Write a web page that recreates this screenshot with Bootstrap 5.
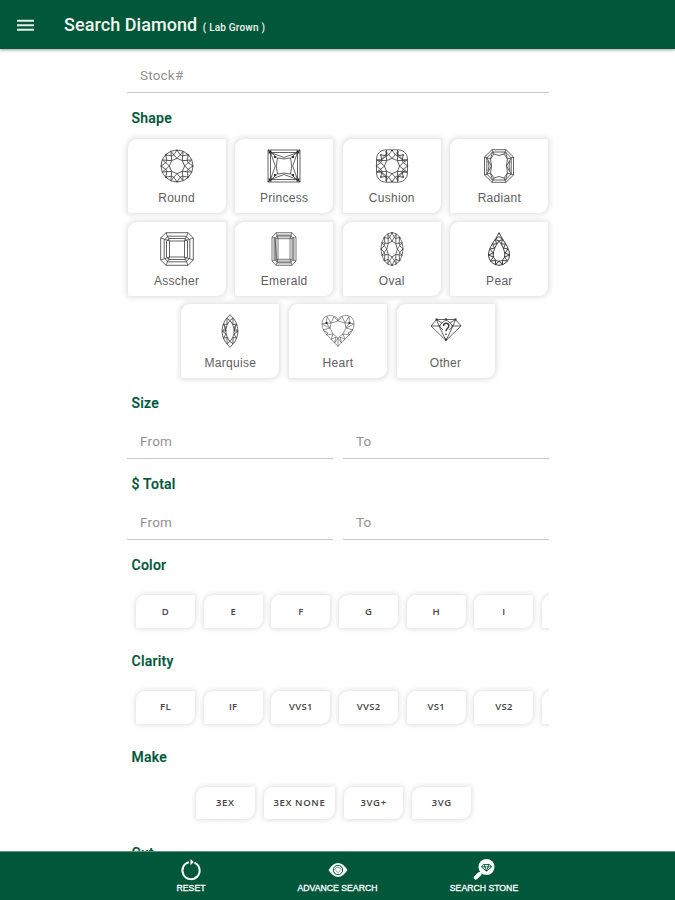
<!DOCTYPE html>
<html lang="en">
<head>
<meta charset="utf-8">
<meta name="viewport" content="width=device-width, initial-scale=1">
<title>Search Diamond</title>
<link href="https://cdn.jsdelivr.net/npm/bootstrap@5.3.0/dist/css/bootstrap.min.css" rel="stylesheet">
<style>
:root{--green:#00573a}
body{font-family:Roboto,"Liberation Sans",sans-serif;background:#fff;color:#444}
.topbar{height:49px;background:var(--green);box-shadow:0 1px 3px rgba(0,0,0,.4);padding:2px 17px 0;z-index:2}
.topbar svg{width:17px;height:13px}
.app-title{font-size:18px;font-weight:500;line-height:24px;letter-spacing:.06px;margin-left:30px;padding-top:2px;color:#f3f6ee}
.app-title span{font-size:10px;letter-spacing:.2px;margin-left:1px}
.panel{width:422px;margin-left:127px}
.field{height:36px;border:0;border-bottom:1px solid #c8c8c8;border-radius:0;background:transparent;padding:0 13px;font-size:13.5px;letter-spacing:.2px;color:#444}
.field::placeholder{color:#929292;opacity:1}
.field:focus{box-shadow:none}
.field-stock{margin-top:8px}
.field-pair{gap:10px;margin-top:10px}
.section-title{font-size:14px;font-weight:500;letter-spacing:.25px;line-height:20px;color:var(--green);margin:15px 0 0;padding-left:4.5px;-webkit-text-stroke:.2px var(--green)}
.title-chips{margin-top:18.3px}
.shapes{margin:11px -2px 0;gap:8.7px 9.6px}
.tile{width:98px;height:74px;background:#fff;border:0;border-radius:9px 2px 9px 2px;box-shadow:0 0 5px 2px rgba(0,0,0,.11);padding:10px 0 0}
.tile svg{width:34px;height:34px;fill:none;stroke:#3c3c3c;stroke-width:.8}
.tile svg.ink-strong{stroke-width:1}
.tile svg.ink-light{stroke:#666;stroke-width:.7}
.tile-name{font:12px/16px "Liberation Sans",Arial,sans-serif;letter-spacing:.3px;color:#606060;margin-top:7px}
.chips{gap:8.7px}
.chips-scroll{margin:15px 0 0;padding:5px 9px;width:422px}
.chips-make{gap:9.2px;padding:5px 13px 5px 4px}
.chip{min-width:59px;height:32.5px;flex:none;background:#fff;border:0;border-radius:9px 2px 9px 2px;box-shadow:0 0 5px 1px rgba(0,0,0,.13);font:9.5px/32px "Open Sans","Liberation Sans",sans-serif;font-weight:600;letter-spacing:.3px;color:#444;text-align:center;padding:0 9.5px}
.chips-make .chip{letter-spacing:.65px}
.bottombar{height:49px;background:var(--green);border-top:1px solid #668f7e;z-index:2}
.bottombar a{width:146.5px;color:#fff;text-decoration:none;font:8.7px/10px "Liberation Sans",Arial,sans-serif;-webkit-text-stroke:.3px #fff;padding-top:7px}
.bottombar svg{width:22px;height:22px;margin-bottom:2px}
</style>
</head>
<body>
<svg width="0" height="0" class="position-absolute" aria-hidden="true">
  <defs>
    <g id="facet"><path d="M0-16 3.2-11.2 0-7.6-3.2-11.2ZM0-7.6 5.4-5.4M3.2-11.2 6.1-14.8M-3.2-11.2-6.1-14.8M3.2-11.2 5.7-10.2"/><circle cx="0" cy="-15.5" r=".5"/></g>
    <g id="brilliant"><use href="#facet"/><use href="#facet" transform="rotate(45)"/><use href="#facet" transform="rotate(90)"/><use href="#facet" transform="rotate(135)"/><use href="#facet" transform="rotate(180)"/><use href="#facet" transform="rotate(225)"/><use href="#facet" transform="rotate(270)"/><use href="#facet" transform="rotate(315)"/></g>
  </defs>
</svg>
<div class="d-flex flex-column vh-100 overflow-hidden">
  <header class="topbar d-flex align-items-center flex-shrink-0 position-relative">
    <svg viewBox="0 0 17 13" aria-label="Menu"><path d="M0 1.800h17M0 6.300h17M0 10.800h17" stroke="#e8eee8" stroke-width="2.100"/></svg>
    <h1 class="app-title mb-0">Search Diamond <span>( Lab Grown )</span></h1>
  </header>

  <main class="flex-grow-1 overflow-hidden">
    <div class="panel">
      <input class="form-control field field-stock" placeholder="Stock#" aria-label="Stock#">
      <h2 class="section-title">Shape</h2>
      <div class="shapes d-flex flex-wrap justify-content-center">
        <button class="tile d-flex flex-column align-items-center"><svg viewBox="-17 -17 34 34"><circle r="16"/><use href="#brilliant"/></svg><span class="tile-name">Round</span></button>
        <button class="tile d-flex flex-column align-items-center"><svg viewBox="-17 -17 34 34"><path d="M-16-16H16V16H-16ZM-13.5-13.5H13.5V13.5H-13.5ZM-16-16-6.5-8Q0-6 6.5-8L16-16M-16 16-6.5 8Q0 6 6.5 8L16 16M-6.5-8Q-9 0-6.5 8M6.5-8Q9 0 6.5 8M-13.5-13.5 0-8.5 13.5-13.5 8.7 0 13.5 13.5 0 8.5-13.5 13.5-8.7 0Z"/><path d="M-15.500-15.500h3v3h-3zM12.500-15.500h3v3h-3zM-15.500 12.500h3v3h-3zM12.500 12.500h3v3h-3zM-10-10h2v2h-2zM8-10h2v2H8zM-10 8h2v2h-2zM8 8h2v2H8z" fill="#333" stroke="none"/></svg><span class="tile-name">Princess</span></button>
        <button class="tile d-flex flex-column align-items-center"><svg viewBox="-17 -17 34 34"><rect x="-15.500" y="-16.200" width="31" height="32.400" rx="9"/><use href="#brilliant"/><path d="M-5.5-16V-10L-13.5-4M5.5-16V-10L13.5-4M-5.5 16V10L-13.5 4M5.5 16V10L13.5 4M-15.5-6H-11L-6-12M15.5-6H11L6-12M-15.5 6H-11L-6 12M15.5 6H11L6 12"/></svg><span class="tile-name">Cushion</span></button>
        <button class="tile d-flex flex-column align-items-center"><svg viewBox="-17 -17 34 34"><path d="M-7-16.3H7L14.5-9V9L7 16.3H-7L-14.5 9V-9ZM-6.5-14H6.5L12.2-8V8L6.5 14H-6.5L-12.2 8V-8ZM-5-12 0-10.5 5-12 8.5-7 7.5 0 8.5 7 5 12 0 10.5-5 12-8.5 7-7.5 0-8.5-7ZM-7-16.3-5-12M7-16.3 5-12M-7 16.3-5 12M7 16.3 5 12M-14.5-9-8.5-7M14.5-9 8.5-7M-14.5 9-8.5 7M14.5 9 8.5 7M-12.2-8-7.5 0-12.2 8M12.2-8 7.5 0 12.2 8M-11-5-10 0-11 5M11-5 10 0 11 5M-6.5-14-8.5-7M6.5-14 8.5-7M-6.5 14-8.5 7M6.5 14 8.5 7"/></svg><span class="tile-name">Radiant</span></button>
        <button class="tile d-flex flex-column align-items-center"><svg viewBox="-17 -17 34 34"><path d="M-11-16.3H11L16.3-11V11L11 16.3H-11L-16.3 11V-11ZM-9-12.8H9L12.8-9V9L9 12.8H-9L-12.8 9V-9ZM-8-10.5H8L10.5-8V8L8 10.5H-8L-10.5 8V-8ZM-7.5-8H7.5V8H-7.5ZM-11-16.3-7.5-8-16.3-11M11-16.3 7.5-8 16.3-11M-11 16.3-7.5 8-16.3 11M11 16.3 7.5 8 16.3 11"/></svg><span class="tile-name">Asscher</span></button>
        <button class="tile d-flex flex-column align-items-center"><svg viewBox="-17 -17 34 34"><path d="M-9-11V11M9-11V11M-7-13.200H7M-7 13.200H7" stroke="#c4c4c4" stroke-width="4"/><path d="M-8-16.3H8L12-12V12L8 16.3H-8L-12 12V-12ZM-7-13.2H7L9-10.5V10.5L7 13.2H-7L-9-10.5V-10.5ZM-6-10.3H6V10.3H-6ZM-8-16.3-6-10.3-12-12M8-16.3 6-10.3 12-12M-8 16.3-6 10.3-12 12M8 16.3 6 10.3 12 12M-9-10.500V10.500L-7 13.200" stroke="#555"/></svg><span class="tile-name">Emerald</span></button>
        <button class="tile d-flex flex-column align-items-center"><svg viewBox="-17 -17 34 34"><g transform="scale(.69 1.03)"><circle r="16"/><use href="#brilliant"/></g></svg><span class="tile-name">Oval</span></button>
        <button class="tile d-flex flex-column align-items-center"><svg class="ink-strong" viewBox="-17 -17 34 34"><path d="M0-16.3C-4-8-10.5-2-10.5 6A10.5 10.3 0 0 0 10.5 6C10.5-2 4-8 0-16.3ZM0-8C-3-4-5.8 1-5.8 6A5.8 6.3 0 0 0 5.800 6C5.800 1 3-4 0-8ZM-3.5-9.5 0-8 3.5-9.5 0-12.500ZM-6.5-5-4.5-1-9 0-6 4-10.5 6-5.5 8-8.5 12-3.5 11.5-3.5 15.5 0 12.3 3.5 15.5 3.5 11.5 8.5 12 5.5 8 10.5 6 6 4 9 0 4.5-1 6.5-5 2.5-5 3.5-9.5M-6.5-5-2.5-5-3.5-9.5"/></svg><span class="tile-name">Pear</span></button>
        <button class="tile d-flex flex-column align-items-center"><svg viewBox="-17 -17 34 34"><path d="M0-16.3C-10.5-7-10.5 7 0 16.3 10.5 7 10.5-7 0-16.3ZM0-10.5C-5.5-4-5.5 4 0 10.5 5.5 4 5.5-4 0-10.5ZM-3-12.8 0-10.5 3-12.8 3-6.5 6.5-7 4 0 8 0 4 3 6.5 7 3 6.5 3 12.8 0 10.5-3 12.8-3 6.5-6.5 7-4 3-8 0-4 0-6.5-7-3-6.5ZM-8 0-4-3-6.5-7M8 0 4-3 6.5-7"/></svg><span class="tile-name">Marquise</span></button>
        <button class="tile d-flex flex-column align-items-center"><svg class="ink-light" viewBox="-17 -17 34 34"><path d="M0-11.5C-3-17-16-18-16-7-16 2-6 8 0 15.5 6 8 16 2 16-7 16-18 3-17 0-11.5ZM-7-8 0-10 7-8 8-3 5 3 0 7-5 3-8-3ZM0-11.5V-10L-4-14.5-7-8-11-14.5-11.5-8-16-7-8-3-15-1-10 2-12 4-5 3-7 8.5-2 6-3.5 12 0 7 3.5 12 2 6 7 8.5 5 3 12 4 10 2 15-1 8-3 16-7 11.5-8 11-14.5 7-8 4-14.5 0-10M-11.5-8-7-8M11.5-8 7-8M-11.5-8-8-3M11.5-8 8-3M0 7V15.5"/><path d="M-12.500-9h2v2h-2zM10.500-9h2v2h-2z" fill="#333" stroke="none"/></svg><span class="tile-name">Heart</span></button>
        <button class="tile d-flex flex-column align-items-center"><svg viewBox="-17 -17 34 34"><path d="M-9.5-11.5H9.5L15-5 0 9.5-15-5ZM-15-5H-5M5-5H15M-9.5-11.5-7-5 0 9.5 7-5 9.5-11.5M-9.5-11.5-4-8 0-11.5 4-8 9.5-11.5M-4-8-7-5-3-1M4-8 7-5 3-1"/><path d="M-2.500-5C-2.500-8.800 2.800-8.600 2.800-5.200 2.800-2.500 0-2.500 0 .2M0 2.400V4" stroke-width="1.500"/><path d="M-10.500-12.500h2v2h-2zM8.500-12.500h2v2h-2zM-1-12.500h2v2h-2zM-1 7.500h2v2h-2z" fill="#333" stroke="none"/></svg><span class="tile-name">Other</span></button>
      </div>

      <h2 class="section-title">Size</h2>
      <div class="field-pair d-flex">
        <input class="form-control field" placeholder="From" aria-label="Size from"><input class="form-control field" placeholder="To" aria-label="Size to">
      </div>
      <h2 class="section-title">$ Total</h2>
      <div class="field-pair d-flex">
        <input class="form-control field" placeholder="From" aria-label="Total from"><input class="form-control field" placeholder="To" aria-label="Total to">
      </div>

      <h2 class="section-title">Color</h2>
      <div class="chips chips-scroll d-flex overflow-hidden">
        <button class="chip">D</button><button class="chip">E</button><button class="chip">F</button><button class="chip">G</button><button class="chip">H</button><button class="chip">I</button><button class="chip">J</button>
      </div>
      <h2 class="section-title title-chips">Clarity</h2>
      <div class="chips chips-scroll d-flex overflow-hidden">
        <button class="chip">FL</button><button class="chip">IF</button><button class="chip">VVS1</button><button class="chip">VVS2</button><button class="chip">VS1</button><button class="chip">VS2</button><button class="chip">SI1</button>
      </div>
      <h2 class="section-title title-chips">Make</h2>
      <div class="chips chips-scroll chips-make d-flex justify-content-center overflow-hidden">
        <button class="chip">3EX</button><button class="chip">3EX NONE</button><button class="chip">3VG+</button><button class="chip">3VG</button>
      </div>
      <h2 class="section-title title-chips">Cut</h2>
    </div>
  </main>

  <nav class="bottombar d-flex justify-content-center flex-shrink-0 position-relative">
    <a href="#" class="d-flex flex-column align-items-center"><svg viewBox="-1 0 22 22"><path d="M13.500 3.700a8.600 8.600 0 1 1-5.500-.5" fill="none" stroke="#fff" stroke-width="2"/><path d="M9.500 0v6.200L12.800 3z" fill="#fff"/></svg>RESET</a>
    <a href="#" class="d-flex flex-column align-items-center"><svg viewBox="0 0 22 22"><path d="M1.500 11Q6 4 11 4T20.500 11Q16 18 11 18T1.500 11Z" fill="#fff"/><circle cx="11" cy="11" r="4.700" fill="none" stroke="#00573a" stroke-width="1"/><path d="M9.300 8.500h3.400l1.300 2-3 3.300-3-3.300z" fill="none" stroke="#00573a" stroke-width=".5"/></svg>ADVANCE SEARCH</a>
    <a href="#" class="d-flex flex-column align-items-center"><svg viewBox="0 0 22 22"><circle cx="13.500" cy="8" r="8" fill="#fff"/><path d="m8.500 13-2 2" stroke="#fff" stroke-width="2"/><path d="m6.500 15-3.700 3.700" stroke="#fff" stroke-width="4" stroke-linecap="round"/><path d="M10.500 5.500h6l2 2.300-5 4.500-5-4.500zM8.500 7.800h10M11 5.500l2.500 6.500L16 5.500" fill="none" stroke="#00573a" stroke-width=".9"/></svg>SEARCH STONE</a>
  </nav>
</div>
<script src="https://cdn.jsdelivr.net/npm/bootstrap@5.3.0/dist/js/bootstrap.bundle.min.js"></script>
</body>
</html>
